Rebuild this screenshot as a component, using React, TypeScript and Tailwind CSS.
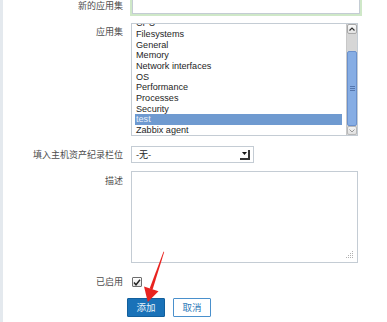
import React from "react";

const items = [
  "CPU",
  "Filesystems",
  "General",
  "Memory",
  "Network interfaces",
  "OS",
  "Performance",
  "Processes",
  "Security",
  "test",
  "Zabbix agent",
];

const cjk = { fontFamily: '"Noto Sans CJK SC", "Noto Sans", sans-serif' };
const latin = { fontFamily: '"Liberation Sans", Arial, sans-serif' };

function Label({ text, pt }: { text: string; pt: string }) {
  return (
    <div
      className={`w-[120px] shrink-0 text-right text-[9px] leading-[12px] text-[#4d4d4d] ${pt}`}
      style={cjk}
    >
      {text}
    </div>
  );
}

export default function App() {
  return (
    <div className="relative w-[387px] h-[322px] overflow-hidden bg-white flex">
      <div className="w-[3px] h-full bg-[#e4e9ee] shrink-0" />
      <div className="flex flex-col">
        {/* Row 1: new application */}
        <div className="flex gap-2 mt-[-10px]">
          <Label text="新的应用集" pt="pt-[10px]" />
          <div className="ml-[-1px] w-[232px] h-[26px] border-2 border-[#cfe8c8]">
            <div className="w-full h-full border border-[#c4ccd4] bg-white" />
          </div>
        </div>

        {/* Row 2: application list */}
        <div className="flex gap-2 mt-[7px]">
          <Label text="应用集" pt="pt-[3px]" />
          <div className="w-[227px] h-[113px] border border-[#c4ccd4] bg-white flex overflow-hidden">
            <div className="flex-1 overflow-hidden pl-[3px] pr-[4px]">
              <div className="mt-[-5.6px]" style={latin}>
                {items.map((it) => (
                  <div
                    key={it}
                    className={`h-[10.67px] leading-[10.67px] text-[9.1px] pl-[1px] whitespace-nowrap ${
                      it === "test"
                        ? "bg-[#6f9ad0] text-[#e8f0fa]"
                        : "text-[#1e1e1e]"
                    }`}
                  >
                    {it}
                  </div>
                ))}
              </div>
            </div>
            {/* scrollbar */}
            <div className="w-[11px] h-full flex flex-col bg-[#d9d9d9] border-l border-[#c8c8c8]">
              <div className="h-[10px] bg-gradient-to-b from-[#fbfbfb] to-[#e2e2e2] border border-[#a8a8a8] rounded-[2px] flex items-center justify-center">
                <svg width="6" height="4" viewBox="0 0 6 4">
                  <path d="M0.5 3.5 L3 1 L5.5 3.5" fill="none" stroke="#333" strokeWidth="1.2" />
                </svg>
              </div>
              <div className="h-[17px] bg-[#d6d6d6]" />
              <div className="flex-1 bg-[#86ade4] border border-[#6a90cc] rounded-[2px] flex items-center justify-center">
                <svg width="5" height="6" viewBox="0 0 5 6">
                  <path d="M0 0.5 H5 M0 2.5 H5 M0 4.5 H5" stroke="#5576ad" strokeWidth="1" />
                </svg>
              </div>
              <div className="h-[9px] bg-gradient-to-b from-[#f4f4f4] to-[#e0e0e0] border border-[#b8b8b8] rounded-[2px] flex items-center justify-center">
                <svg width="6" height="4" viewBox="0 0 6 4">
                  <path d="M0.5 0.5 L3 3 L5.5 0.5" fill="none" stroke="#999" strokeWidth="1" />
                </svg>
              </div>
            </div>
          </div>
        </div>

        {/* Row 3: inventory select */}
        <div className="flex gap-2 mt-[10px]">
          <Label text="填入主机资产纪录栏位" pt="pt-[3px]" />
          <div className="w-[123px] h-[17px] border border-[#c4ccd4] bg-white flex items-center pl-[4px] pr-[3px]">
            <span className="flex-1 text-[9px] leading-[12px] text-[#222]" style={cjk}>
              -无-
            </span>
            <div className="w-[10px] h-[10px] border-r-2 border-b-2 border-[#333] bg-[#fafafa] flex items-center justify-center">
              <svg width="5" height="3" viewBox="0 0 5 3">
                <path d="M0 0 H5 L2.5 3 Z" fill="#111" />
              </svg>
            </div>
          </div>
        </div>

        {/* Row 4: description */}
        <div className="flex gap-2 mt-[8px]">
          <Label text="描述" pt="pt-[4px]" />
          <div className="relative w-[227px] h-[92px] border border-[#c4ccd4] bg-white">
            <svg
              className="absolute right-[3px] bottom-[3px]"
              width="9"
              height="8"
              viewBox="0 0 9 8"
            >
              <g fill="#b0b0b0">
                <rect x="7" y="0" width="1" height="1" />
                <rect x="5" y="2" width="1" height="1" />
                <rect x="7" y="2" width="1" height="1" />
                <rect x="3" y="4" width="1" height="1" />
                <rect x="5" y="4" width="1" height="1" />
                <rect x="7" y="4" width="1" height="1" />
                <rect x="1" y="6" width="1" height="1" />
                <rect x="3" y="6" width="1" height="1" />
                <rect x="5" y="6" width="1" height="1" />
                <rect x="7" y="6" width="1" height="1" />
              </g>
            </svg>
          </div>
        </div>

        {/* Row 5: enabled */}
        <div className="flex gap-2 mt-[13px] items-start">
          <Label text="已启用" pt="pt-0" />
          <div className="mt-[1px] ml-[1px] w-[10px] h-[10px] border border-[#6d6d6d] rounded-[1px] bg-gradient-to-b from-white to-[#e4e4e4] flex items-center justify-center">
            <svg width="8" height="7" viewBox="0 0 8 7">
              <path d="M1 3.5 L3 5.8 L7 0.8" fill="none" stroke="#222" strokeWidth="1.4" />
            </svg>
          </div>
        </div>

        {/* Row 6: buttons */}
        <div className="flex gap-2 mt-[10px]">
          <div className="w-[120px] shrink-0" />
          <div className="flex gap-2 ml-[-4px]">
            <div
              className="w-[38px] h-[19px] bg-[#1a72b8] border border-[#125f9c] rounded-[1px] text-[#eaf2fa] text-[9.5px] leading-[17px] text-center"
              style={cjk}
            >
              添加
            </div>
            <div
              className="w-[38px] h-[19px] bg-white border border-[#4a90cc] rounded-[1px] text-[#2c78b8] text-[9.5px] leading-[17px] text-center"
              style={cjk}
            >
              取消
            </div>
          </div>
        </div>
      </div>

      {/* red arrow annotation */}
      <svg
        className="absolute left-0 top-0 pointer-events-none"
        width="387"
        height="322"
        viewBox="0 0 387 322"
      >
        <path d="M163.6 251.5 L164.2 252 L152.6 289.6 L149.6 288.6 Z" fill="#e8231f" />
        <path d="M144 286.5 L158.5 291.2 L147.8 302 Z" fill="#e8231f" />
      </svg>
    </div>
  );
}
